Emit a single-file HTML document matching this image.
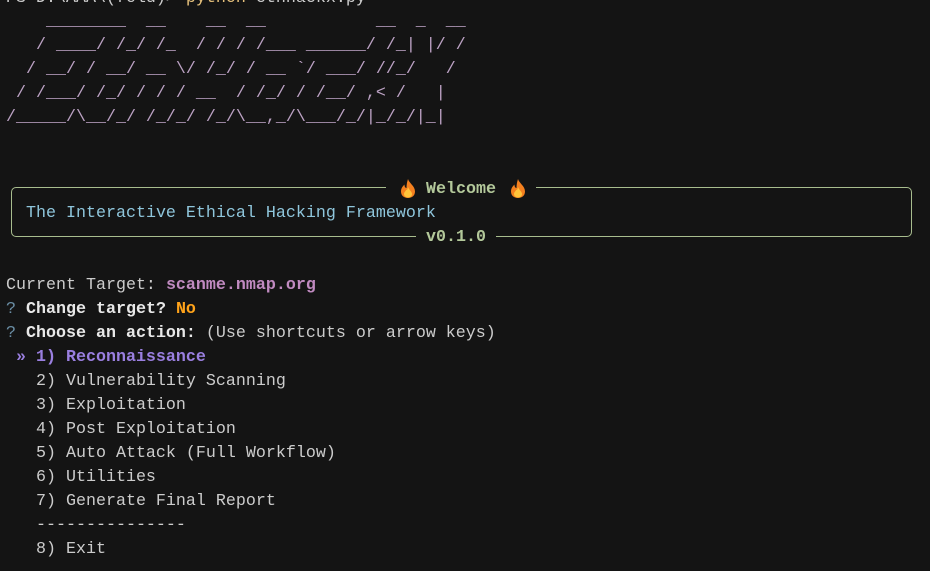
<!DOCTYPE html>
<html><head><meta charset="utf-8"><style>
html,body{margin:0;padding:0;background:#141414;width:930px;height:571px;overflow:hidden}
.l{position:absolute;left:6px;white-space:pre;font-family:"Liberation Mono","DejaVu Sans Mono",monospace;font-size:16.67px;line-height:24px;height:24px;color:#cccccc}
.art{color:#bca2c4}
b{font-weight:bold}
.box{position:absolute;left:11px;top:187px;width:899px;height:48px;border:1.5px solid #a8bd8e;border-radius:5px}
.ttl{position:absolute;background:#141414;height:24px;font-family:"Liberation Mono",monospace;font-size:16.67px;line-height:24px;color:#b3c89a;font-weight:bold;white-space:pre}
</style></head><body>
<div class="l" style="top:-13px;color:#cccccc">PS D:\AAA\(fold)&gt; <span style="color:#e5c07b">python</span> ethhackx.py</div>
<div class="l art" style="top:10px">    ________  __    __  __           __  _  __</div>
<div class="l art" style="top:34px">   / ____/ /_/ /_  / / / /___ ______/ /_| |/ /</div>
<div class="l art" style="top:58px">  / __/ / __/ __ \/ /_/ / __ `/ ___/ //_/   /</div>
<div class="l art" style="top:82px"> / /___/ /_/ / / / __  / /_/ / /__/ ,&lt; /   |</div>
<div class="l art" style="top:106px">/_____/\__/_/ /_/_/ /_/\__,_/\___/_/|_/_/|_|</div>

<div class="box"></div>
<div class="ttl" style="left:386px;top:176px;width:150px">
<svg style="position:absolute;left:14px;top:3px" width="16" height="19" viewBox="0 0 16 19"><path d="M8 0C9 4 15 7 15 12.5C15 16.5 12 19 8 19C4 19 1 16.5 1 12.5C1 9 3 7 4.5 5.5C4.5 8 5.5 9 6.5 9C6.5 6 7 3 8 0Z" fill="#f4801f"/><path d="M8 8C9 11 12 12.5 12 15C12 17 10.3 18.5 8 18.5C5.7 18.5 4 17 4 15C4 13 6 12 6.5 10.5C7 12 7.5 10 8 8Z" fill="#ffc43a"/></svg>
<span style="position:absolute;left:40px;top:2px">Welcome</span>
<svg style="position:absolute;left:124px;top:3px" width="16" height="19" viewBox="0 0 16 19"><path d="M8 0C9 4 15 7 15 12.5C15 16.5 12 19 8 19C4 19 1 16.5 1 12.5C1 9 3 7 4.5 5.5C4.5 8 5.5 9 6.5 9C6.5 6 7 3 8 0Z" fill="#f4801f"/><path d="M8 8C9 11 12 12.5 12 15C12 17 10.3 18.5 8 18.5C5.7 18.5 4 17 4 15C4 13 6 12 6.5 10.5C7 12 7.5 10 8 8Z" fill="#ffc43a"/></svg>
</div>
<div class="l" style="top:202px;left:26px;color:#8fc6dc">The Interactive Ethical Hacking Framework</div>
<div class="ttl" style="left:416px;top:224px;width:80px;text-align:center;line-height:28px">v0.1.0</div>

<div class="l" style="top:274px">Current Target: <b style="color:#c08ac0">scanme.nmap.org</b></div>
<div class="l" style="top:298px"><span style="color:#6b8fa6">?</span> <b style="color:#e8e8e8">Change target?</b> <b style="color:#ffa31a">No</b></div>
<div class="l" style="top:322px"><span style="color:#6b8fa6">?</span> <b style="color:#e8e8e8">Choose an action:</b> (Use shortcuts or arrow keys)</div>
<div class="l" style="top:346px;color:#9a7fe0"><b> » 1) Reconnaissance</b></div>
<div class="l" style="top:370px">   2) Vulnerability Scanning</div>
<div class="l" style="top:394px">   3) Exploitation</div>
<div class="l" style="top:418px">   4) Post Exploitation</div>
<div class="l" style="top:442px">   5) Auto Attack (Full Workflow)</div>
<div class="l" style="top:466px">   6) Utilities</div>
<div class="l" style="top:490px">   7) Generate Final Report</div>
<div class="l" style="top:514px">   ---------------</div>
<div class="l" style="top:538px">   8) Exit</div>
</body></html>
